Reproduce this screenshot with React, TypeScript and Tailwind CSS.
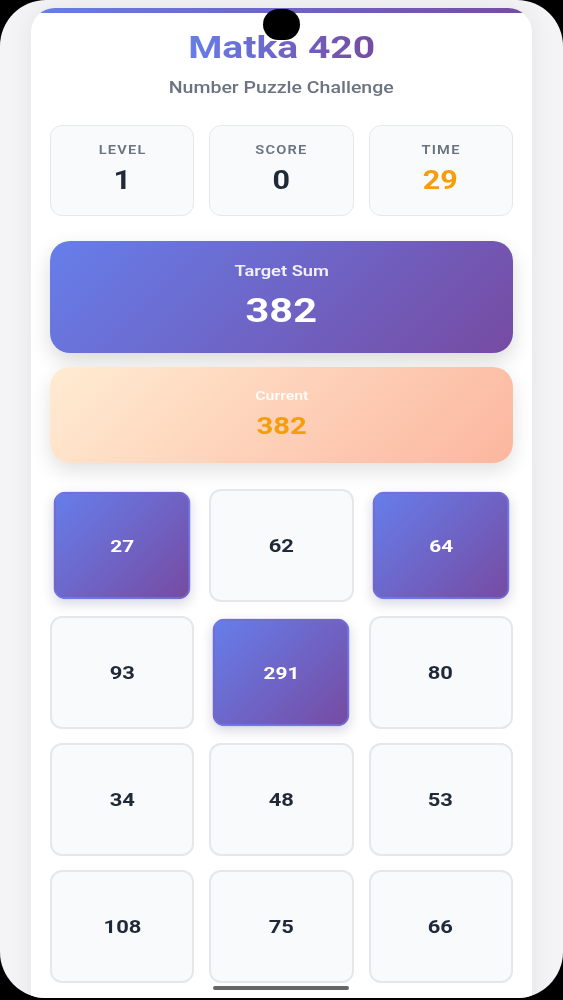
import React from "react";

const cells: { n: number; sel: boolean }[] = [
  { n: 27, sel: true },
  { n: 62, sel: false },
  { n: 64, sel: true },
  { n: 93, sel: false },
  { n: 291, sel: true },
  { n: 80, sel: false },
  { n: 34, sel: false },
  { n: 48, sel: false },
  { n: 53, sel: false },
  { n: 108, sel: false },
  { n: 75, sel: false },
  { n: 66, sel: false },
];

function W({ children, className = "" }: { children: React.ReactNode; className?: string }) {
  return <span className={`inline-block scale-x-[1.22] ${className}`}>{children}</span>;
}

function Stat({ label, value, orange }: { label: string; value: string; orange?: boolean }) {
  return (
    <div className="h-[91px] rounded-xl border border-[#e5e7eb] bg-[#f8fafc] pt-[16px] flex flex-col items-center">
      <div className="text-[12px] leading-4 font-semibold tracking-[1px] text-[#6b7280]">
        <W>{label}</W>
      </div>
      <div
        className={`mt-[8px] text-[25px] leading-[30px] font-bold ${orange ? "text-[#f59e0b]" : "text-[#1f2937]"}`}
      >
        <W>{value}</W>
      </div>
    </div>
  );
}

export default function App() {
  return (
    <div className="w-full h-[1000px] bg-black overflow-hidden" style={{ fontFamily: "Roboto, 'Noto Sans', sans-serif" }}>
      <div className="relative h-[998px] w-full rounded-[46px] bg-[#f4f4f6] overflow-hidden">
        <div className="relative mx-[31px] mt-[8px] h-[1100px] rounded-t-3xl bg-white shadow-[0_0_24px_rgba(0,0,0,0.07)] overflow-hidden px-[19px] pt-[20px]">
          <div className="absolute left-0 right-0 top-0 h-[5px] bg-[linear-gradient(90deg,#667eea_0%,#764ba2_100%)]" />
          <h1 className="text-center text-[32px] leading-[38px] font-bold">
            <W className="bg-[linear-gradient(90deg,#667eea_0%,#764ba2_100%)] bg-clip-text text-transparent">
              Matka 420
            </W>
          </h1>
          <p className="mt-[10px] text-center text-[16px] leading-6 font-medium text-[#6b7280]">
            <W>Number Puzzle Challenge</W>
          </p>
          <div className="mt-[25px] grid grid-cols-3 gap-[15px]">
            <Stat label="LEVEL" value="1" />
            <Stat label="SCORE" value="0" />
            <Stat label="TIME" value="29" orange />
          </div>
          <div className="mt-[25px] h-[112px] rounded-[20px] bg-[linear-gradient(135deg,#667eea_0%,#764ba2_100%)] shadow-[0_8px_20px_rgba(0,0,0,0.15)] flex flex-col items-center pt-[20px]">
            <div className="text-[15px] leading-5 font-semibold text-white/90">
              <W>Target Sum</W>
            </div>
            <div className="mt-[8px] text-[34px] leading-[42px] font-bold text-white">
              <W>382</W>
            </div>
          </div>
          <div className="mt-[14px] h-[96px] rounded-[20px] bg-[linear-gradient(135deg,#ffecd2_0%,#fcb69f_100%)] shadow-[0_8px_20px_rgba(0,0,0,0.12)] flex flex-col items-center pt-[20px]">
            <div className="text-[13px] leading-[18px] font-semibold text-white/90">
              <W>Current</W>
            </div>
            <div className="mt-[6px] text-[24px] leading-[30px] font-bold text-[#f59e0b]">
              <W>382</W>
            </div>
          </div>
          <div className="mt-[26px] grid grid-cols-3 gap-x-[15px] gap-y-[14px]">
            {cells.map((c, i) =>
              c.sel ? (
                <div
                  key={i}
                  className="h-[113px] scale-95 rounded-xl border-2 border-[rgba(118,122,232,0.55)] bg-[linear-gradient(135deg,#667eea_0%,#764ba2_100%)] shadow-[0_5px_12px_rgba(60,60,120,0.2)] flex items-center justify-center text-[18px] font-bold text-white"
                >
                  <W>{c.n}</W>
                </div>
              ) : (
                <div
                  key={i}
                  className="h-[113px] rounded-xl border-2 border-[#e5e7eb] bg-[#f8fafc] flex items-center justify-center text-[18px] font-bold text-[#1f2937]"
                >
                  <W>{c.n}</W>
                </div>
              )
            )}
          </div>
        </div>
        <div className="absolute left-[263px] top-[9px] w-[37px] h-[31px] rounded-full bg-black" />
        <div className="absolute left-[213px] top-[986px] w-[136px] h-[4px] rounded-full bg-[#666666]" />
      </div>
    </div>
  );
}
